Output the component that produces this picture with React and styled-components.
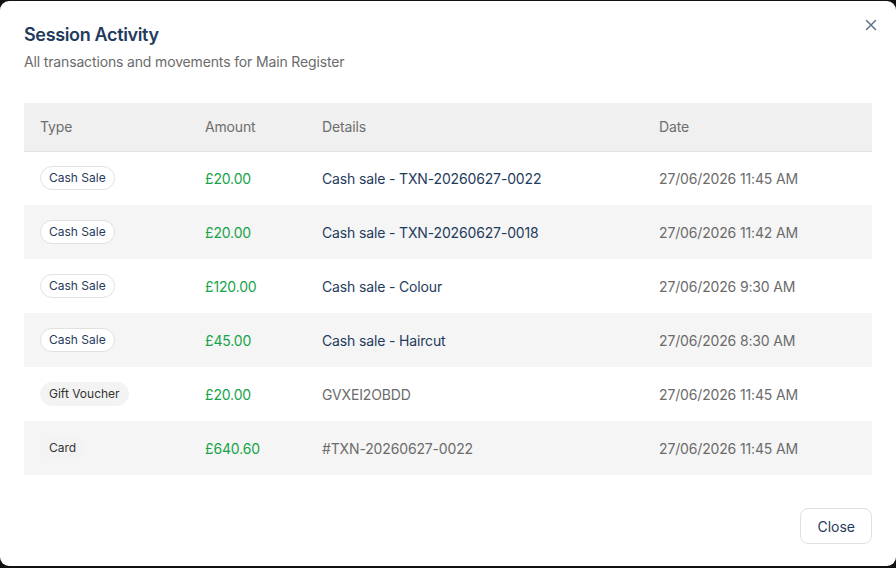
import React from "react";
import styled, { createGlobalStyle } from "styled-components";

const GlobalStyle = createGlobalStyle`
  html, body {
    margin: 0;
    padding: 0;
    background: #111;
    font-family: "Inter", "Liberation Sans", sans-serif;
  }
  * { box-sizing: border-box; }
`;

const Overlay = styled.div`
  width: 896px;
  height: 568px;
  padding: 1px 0 2px;
  background: #111;
`;

const Dialog = styled.div`
  position: relative;
  height: 100%;
  background: #fff;
  border-radius: 9px;
  padding: 23px 24px 22px;
  display: flex;
  flex-direction: column;
`;

const Title = styled.h2`
  margin: 0;
  font-size: 18px;
  font-weight: 600;
  line-height: 22px;
  letter-spacing: -0.35px;
  color: #1f3b5c;
`;

const Subtitle = styled.p`
  margin: 6px 0 0;
  font-size: 14px;
  line-height: 20px;
  letter-spacing: -0.15px;
  color: #6b6b6b;
`;

const CloseIcon = styled.button`
  position: absolute;
  top: 16px;
  right: 17px;
  width: 16px;
  height: 16px;
  padding: 0;
  border: none;
  background: none;
  color: #5f7288;
  display: flex;
  align-items: center;
  justify-content: center;
`;

const Table = styled.table`
  margin-top: 31px;
  width: 100%;
  border-collapse: collapse;
  table-layout: fixed;
  font-size: 14px;
  letter-spacing: -0.15px;
`;

const Th = styled.th`
  height: 48px;
  padding: 0 16px;
  text-align: left;
  font-weight: 400;
  color: #6e6e6e;
  background: #f0f0f0;
  border-bottom: 1px solid #e2e2e2;
`;

const Row = styled.tr`
  background: ${(p) => (p.$alt ? "#f5f5f5" : "#fff")};
`;

const Td = styled.td`
  height: 54px;
  padding: 0 16px;
  color: ${(p) => p.$color || "#6b6b6b"};
`;

const Badge = styled.span`
  display: inline-block;
  vertical-align: middle;
  padding: 3px 8px;
  border-radius: 999px;
  font-size: 12px;
  line-height: 16px;
  letter-spacing: 0;
  border: 1px solid ${(p) => (p.$outline ? "#e1e1e1" : "#f3f3f3")};
  background: ${(p) => (p.$outline ? "#fff" : "#f3f3f3")};
  color: ${(p) => (p.$outline ? "#1f3b5c" : "#333")};
`;

const Footer = styled.div`
  margin-top: auto;
  display: flex;
  justify-content: flex-end;
`;

const CloseButton = styled.button`
  height: 36px;
  padding: 0 16px;
  border: 1px solid #e1e1e1;
  border-radius: 8px;
  background: #fff;
  font-family: inherit;
  font-size: 14px;
  color: #1f3b5c;
`;

const rows = [
  { type: "Cash Sale", outline: true, amount: "£20.00", details: "Cash sale - TXN-20260627-0022", strong: true, date: "27/06/2026 11:45 AM" },
  { type: "Cash Sale", outline: true, amount: "£20.00", details: "Cash sale - TXN-20260627-0018", strong: true, date: "27/06/2026 11:42 AM" },
  { type: "Cash Sale", outline: true, amount: "£120.00", details: "Cash sale - Colour", strong: true, date: "27/06/2026 9:30 AM" },
  { type: "Cash Sale", outline: true, amount: "£45.00", details: "Cash sale - Haircut", strong: true, date: "27/06/2026 8:30 AM" },
  { type: "Gift Voucher", outline: false, amount: "£20.00", details: "GVXEI2OBDD", strong: false, date: "27/06/2026 11:45 AM" },
  { type: "Card", outline: false, amount: "£640.60", details: "#TXN-20260627-0022", strong: false, date: "27/06/2026 11:45 AM" },
];

const App = () => {
  return (
    <Overlay>
      <GlobalStyle />
      <Dialog>
        <Title>Session Activity</Title>
        <Subtitle>All transactions and movements for Main Register</Subtitle>
        <CloseIcon aria-label="Close">
          <svg width="12" height="12" viewBox="0 0 12 12" fill="none" stroke="currentColor" strokeWidth="1.5" strokeLinecap="round">
            <path d="M1.5 1.5l9 9M10.5 1.5l-9 9" />
          </svg>
        </CloseIcon>
        <Table>
          <colgroup>
            <col style={{ width: 165 }} />
            <col style={{ width: 117 }} />
            <col style={{ width: 337 }} />
            <col />
          </colgroup>
          <thead>
            <tr>
              <Th>Type</Th>
              <Th>Amount</Th>
              <Th>Details</Th>
              <Th>Date</Th>
            </tr>
          </thead>
          <tbody>
            {rows.map((r, i) => (
              <Row key={i} $alt={i % 2 === 1}>
                <Td>
                  <Badge $outline={r.outline}>{r.type}</Badge>
                </Td>
                <Td $color="#16a34a">{r.amount}</Td>
                <Td $color={r.strong ? "#1f3b5c" : "#6b6b6b"}>{r.details}</Td>
                <Td>{r.date}</Td>
              </Row>
            ))}
          </tbody>
        </Table>
        <Footer>
          <CloseButton>Close</CloseButton>
        </Footer>
      </Dialog>
    </Overlay>
  );
};

export default App;
